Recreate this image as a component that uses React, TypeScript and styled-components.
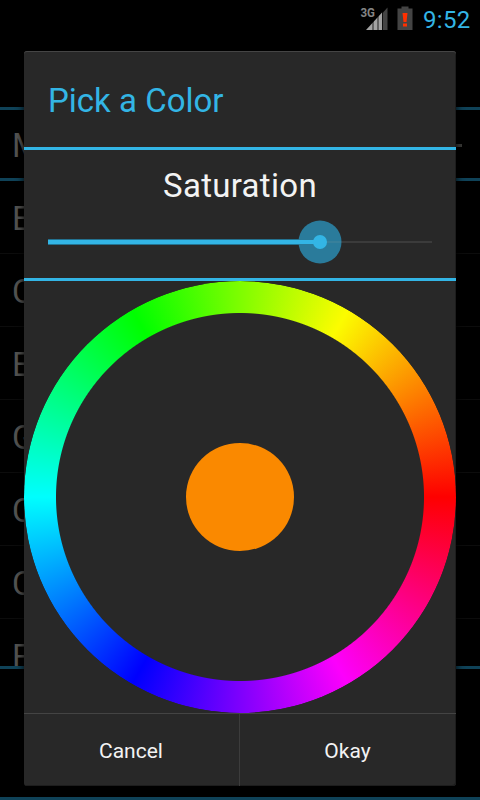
import React from "react";
import styled, { createGlobalStyle } from "styled-components";

const Global = createGlobalStyle`
  * { box-sizing: border-box; }
  body { margin: 0; background: #000; font-family: Roboto, sans-serif; }
`;

const Screen = styled.div`
  display: grid;
  grid-template: 800px / 480px;
  width: 480px;
  height: 800px;
  overflow: hidden;
  background: #000;
`;

const Backdrop = styled.div`
  grid-area: 1 / 1;
  display: flex;
  flex-direction: column;
  min-width: 0;
`;

const StatusBar = styled.header`
  height: 38px;
  padding-right: 10px;
  display: flex;
  justify-content: flex-end;
  align-items: center;
`;

const Clock = styled.span`
  width: 47px;
  margin-left: 10px;
  color: #33b5e5;
  font-size: 24px;
  letter-spacing: 0.3px;
  line-height: 38px;
  padding-top: 2px;
  white-space: nowrap;
`;

const SpinnerRow = styled.div`
  height: 74px;
  margin-top: 69px;
  border-top: 3px solid #0f4258;
  border-bottom: 3px solid #0f4258;
  padding: 2px 18px 0 12px;
  display: flex;
  align-items: center;
  justify-content: space-between;
  color: #535351;
  font-size: 33px;
`;

const Dash = styled.span`
  width: 12px;
  height: 3px;
  background: #3a3a38;
`;

const List = styled.div`
  height: 488px;
  border-bottom: 3px solid #0f4258;
  overflow: hidden;
`;

const ListRow = styled.div`
  height: 73px;
  padding-left: 12px;
  border-bottom: 1px solid #0c0c0c;
  color: #535351;
  font-size: 33px;
  line-height: 76px;
  white-space: nowrap;
`;

const BottomLine = styled.div`
  height: 3px;
  margin-top: auto;
  background: #0f4258;
`;

const Dialog = styled.section`
  grid-area: 1 / 1;
  align-self: start;
  justify-self: center;
  z-index: 1;
  width: 432px;
  height: 735px;
  margin-top: 51px;
  border-radius: 3px;
  background: #282828;
  box-shadow: 0 0 8px #000, inset 0 1px #454545, inset -1px -1px #1d1d1d;
  display: flex;
  flex-direction: column;
`;

const Title = styled.h1`
  margin: 0;
  height: 99px;
  padding-left: 24px;
  border-bottom: 3px solid #33b5e5;
  color: #33b5e5;
  font-size: 33px;
  font-weight: 400;
  line-height: 100px;
`;

const SaturationPanel = styled.div`
  height: 131px;
  padding: 0 24px;
  border-bottom: 3px solid #33b5e5;
`;

const Label = styled.div`
  height: 70px;
  color: #f3f3f3;
  font-size: 33px;
  letter-spacing: 0.3px;
  line-height: 72px;
  text-align: center;
`;

const SliderArt = styled.svg`
  display: block;
  width: 384px;
  height: 44px;
`;

const WheelArea = styled.div`
  height: 432px;
  display: grid;
  place-items: center;
`;

const Ring = styled.div`
  grid-area: 1 / 1;
  width: 432px;
  height: 432px;
  border-radius: 50%;
  background: conic-gradient(from 90deg, #fe0000, #fc00fc, #0000fe, #00fefe, #00fe00, #fcfc00, #fe0000);
  mask: radial-gradient(circle, transparent 183.5px, #000 184.5px);
`;

const Swatch = styled.button`
  grid-area: 1 / 1;
  width: 108px;
  height: 108px;
  padding: 0;
  border: 0;
  border-radius: 50%;
  background: #fa8900;
`;

const Actions = styled.div`
  flex: 1;
  display: grid;
  grid-template-columns: 216px 216px;
  border-top: 1px solid #444;
`;

const Action = styled.button`
  padding: 1px 1px 0 0;
  border: 0;
  background: none;
  color: #f3f3f3;
  font: 400 21px Roboto, sans-serif;
  &:first-child { border-right: 1px solid #3c3c3c; }
`;

const rows = ["Effects", "Colors", "Edges", "Grid", "Corners", "Contrast", "Frame"];

function StatusIcons() {
  return (
    <svg width="53" height="38" viewBox="360 0 53 38">
      <text x="360.5" y="17" fontFamily="Roboto" fontWeight="700" fontSize="12.5" fill="#858585" textLength="14.5" lengthAdjust="spacingAndGlyphs">3G</text>
      <path d="M366 30 L382.500 12 V30Z" fill="#a3a3a3" />
      <path d="M383 12.5 L387.500 7.500 V30 H383Z" fill="#444" />
      <path d="M373 18V30M378 14V30M382.500 10V30" stroke="#000" strokeWidth=".8" />
      <path d="M397.500 8.500H401.500V6.500H408.500V8.500H412.500V30H397.500Z" fill="#444" />
      <path d="M402.500 13H407.500L406.500 22H403.500ZM403 23.500H407V26.500H403Z" fill="#ff3000" />
    </svg>
  );
}

function Slider() {
  return (
    <SliderArt viewBox="48 220 384 44">
      <path d="M48 242H432" stroke="#3b3b3b" strokeWidth="2" />
      <path d="M48 242H320" stroke="#237290" strokeWidth="6" />
      <circle cx="320" cy="242" r="21.500" fill="#2a7b9b" />
      <path d="M320 242H341" stroke="#38809b" strokeWidth="2" />
      <path d="M48 242H320" stroke="#33b5e5" strokeWidth="4" />
      <circle cx="320" cy="242" r="7" fill="#33b5e5" />
    </SliderArt>
  );
}

export default function App() {
  return (
    <Screen>
      <Global />
      <Backdrop>
        <StatusBar>
          <StatusIcons />
          <Clock>9:52</Clock>
        </StatusBar>
        <SpinnerRow>
          <span>Mode</span>
          <Dash />
        </SpinnerRow>
        <List>
          {rows.map((name) => (
            <ListRow key={name}>{name}</ListRow>
          ))}
        </List>
        <BottomLine />
      </Backdrop>
      <Dialog>
        <Title>Pick a Color</Title>
        <SaturationPanel>
          <Label>Saturation</Label>
          <Slider />
        </SaturationPanel>
        <WheelArea>
          <Ring />
          <Swatch aria-label="Selected color" />
        </WheelArea>
        <Actions>
          <Action>Cancel</Action>
          <Action>Okay</Action>
        </Actions>
      </Dialog>
    </Screen>
  );
}
